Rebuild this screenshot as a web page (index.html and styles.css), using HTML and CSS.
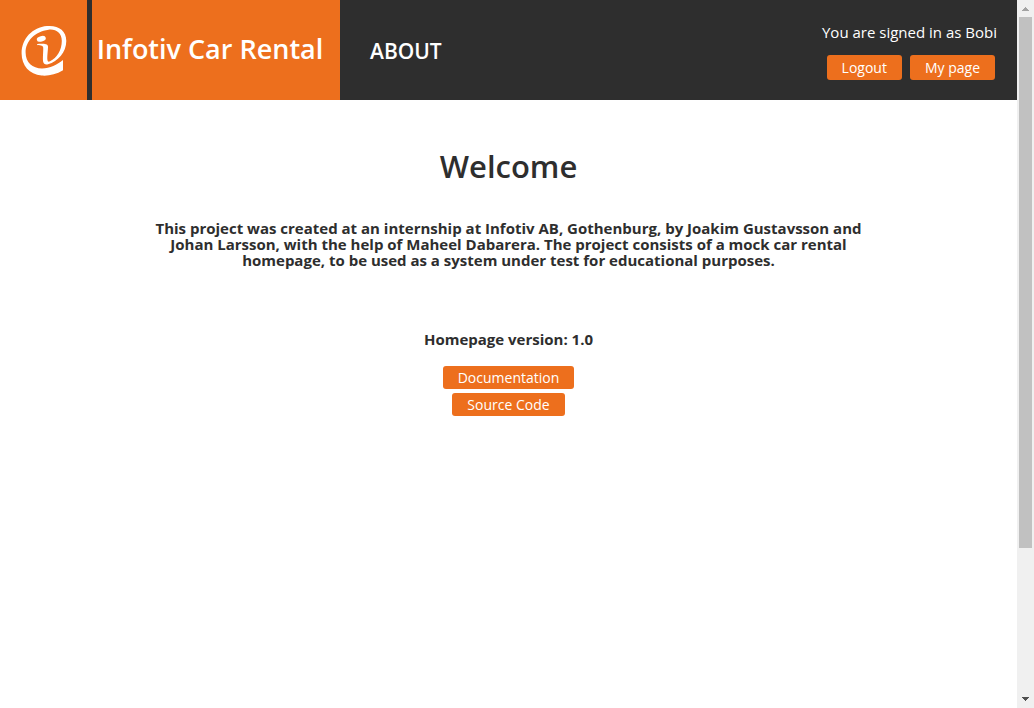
FILE: index.html
```html
<!DOCTYPE html>
<html lang="en">
<head>
<meta charset="utf-8">
<title>Infotiv Car Rental</title>
<link rel="stylesheet" href="styles.css">
</head>
<body>
<div class="page">
  <header class="header">
    <a class="logo" href="#" aria-label="Infotiv">
      <svg class="logo-mark" viewBox="20 23 48 54" aria-hidden="true">
        <path fill="#fff" fill-rule="evenodd" d="M47 26C58 25 66.300 30 66.300 41C66.300 52 58 61.500 48 64.300C45.500 65 43.500 64 43.100 61.500C42.600 58 43.400 51 43.200 47.500C43 45.800 41.500 45.200 37 44.900L37.400 43.900C41 43.900 48 43.100 48 46.500C48 50.500 46.900 57 47.500 60.300C47.700 61.700 48.600 62 50 61.300C57 58 61.800 50 61.800 41C61.800 32.800 56 28.800 48.500 29.700C35 31.500 25.600 41 25.600 52.500C25.600 62.500 32.500 68.300 42 68.500C50 68.500 57 64.500 63 60L63 70.300C56 74.500 48.500 76.200 41.500 75.600C29.500 74.500 21.600 65.500 21.600 53.500C21.600 38.500 32.500 27.300 47 26Z"/>
        <ellipse cx="41.300" cy="38.800" rx="4.600" ry="2.700" transform="rotate(-14 41.300 38.800)" fill="#fff"/>
      </svg>
    </a>
    <a class="brand" href="#">Infotiv Car Rental</a>
    <nav class="nav"><a class="nav-link" href="#">ABOUT</a></nav>
    <div class="account">
      <span class="greeting">You are signed in as Bobi</span>
      <div class="account-actions">
        <button class="button button-tall" type="button">Logout</button>
        <button class="button button-tall" type="button">My page</button>
      </div>
    </div>
  </header>
  <main class="main">
    <h1 class="title">Welcome</h1>
    <p class="intro">This project was created at an internship at Infotiv AB, Gothenburg, by Joakim Gustavsson and Johan Larsson, with the help of Maheel Dabarera. The project consists of a mock car rental homepage, to be used as a system under test for educational purposes.</p>
    <p class="version">Homepage version: 1.0</p>
    <div class="links">
      <button class="button" type="button">Documentation</button>
      <button class="button" type="button">Source Code</button>
    </div>
  </main>
</div>
<div class="scrollbar" aria-hidden="true">
  <svg class="arrow" viewBox="0 0 17 17" shape-rendering="crispEdges"><path fill="#a3a3a3" d="M8 7h1v1h1v1h1v1h1v1H5v-1h1V9h1V8h1z"/></svg>
  <div class="track"><div class="thumb"></div></div>
  <svg class="arrow" viewBox="0 0 17 17" shape-rendering="crispEdges"><path fill="#505050" d="M5 6h7v1h-1v1h-1v1H9v1H8V9H7V8H6V7H5z"/></svg>
</div>
</body>
</html>
```

FILE: styles.css
```css
* {
  box-sizing: border-box;
}

body {
  display: flex;
  min-height: 100vh;
  margin: 0;
  background: #fff;
  color: #2e2e2e;
  font-family: "Trebuchet MS", "Open Sans", sans-serif;
  font-size: 15px;
}

.page {
  flex: 1;
}

.header {
  display: flex;
  height: 100px;
  background: #2e2e2e;
  color: #fff;
}

.logo,
.brand {
  display: flex;
  align-items: center;
  justify-content: center;
  background: #ed6f1d;
}

.logo {
  width: 87px;
  margin-right: 5px;
}

.logo-mark {
  width: 48px;
  height: 54px;
}

.brand {
  width: 248px;
  padding: 0 12px 4px 0;
  color: #fff;
  font-size: 27px;
  font-weight: 600;
  text-decoration: none;
  white-space: nowrap;
}

.nav {
  display: flex;
  flex: 1;
  align-items: center;
  padding: 2px 0 0 30px;
}

.nav-link {
  color: #fff;
  font-size: 21px;
  font-weight: 600;
  text-decoration: none;
}

.account {
  display: flex;
  flex-direction: column;
  align-items: flex-end;
  gap: 12px;
  padding: 22px 20px 0 0;
}

.greeting {
  line-height: 21px;
}

.account-actions {
  display: flex;
  gap: 8px;
  padding-right: 2px;
}

.button {
  height: 23px;
  padding: 0 15px;
  border: 0;
  border-radius: 3px;
  background: #ed6f1d;
  color: #fff;
  font: inherit;
  font-size: 14px;
  line-height: 23px;
}

.button-tall {
  height: 25px;
  line-height: 25px;
}

.main {
  display: flex;
  flex-direction: column;
  align-items: center;
  padding-top: 44px;
  text-align: center;
}

.title {
  margin: 0;
  font-size: 31px;
  font-weight: 600;
  line-height: 44px;
}

.intro {
  width: 72%;
  margin: 32px 0 0;
  font-weight: 700;
  line-height: 16px;
}

.version {
  margin: 61px 0 0;
  font-weight: 700;
  line-height: 20px;
}

.links {
  display: flex;
  flex-direction: column;
  align-items: center;
  gap: 4px;
  margin-top: 17px;
}

.scrollbar {
  display: flex;
  flex-direction: column;
  width: 17px;
  background: #f0f0f0;
}

.arrow {
  width: 17px;
  height: 17px;
}

.track {
  flex: 1;
  padding: 0 2px;
}

.thumb {
  height: 531px;
  background: #c1c1c1;
}
```
